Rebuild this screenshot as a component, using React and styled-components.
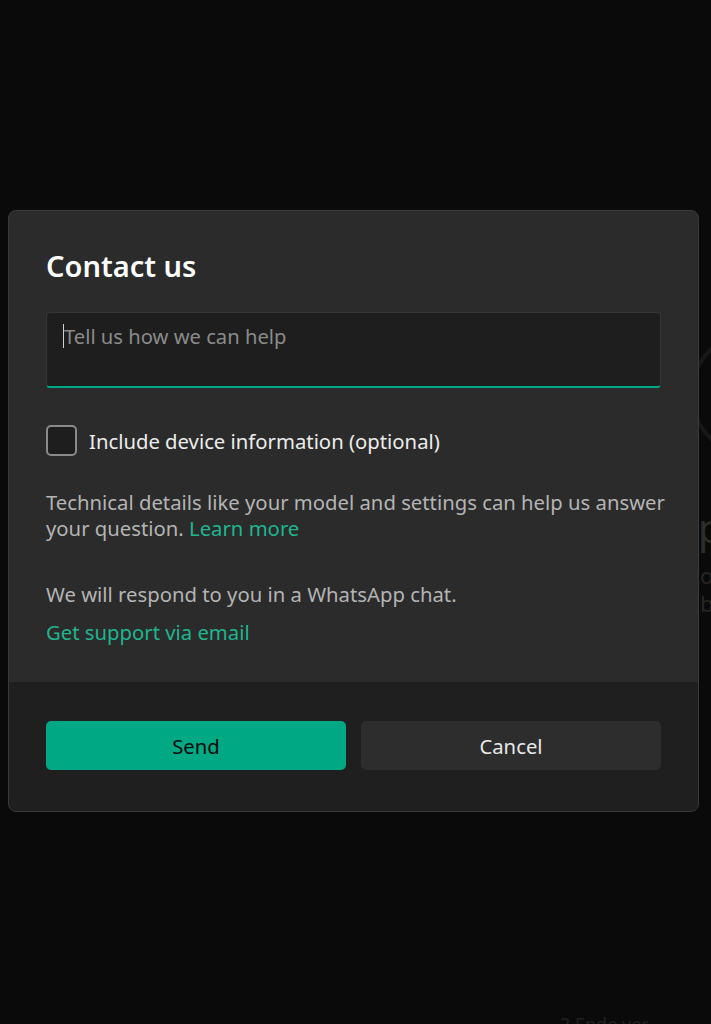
import React, { useState } from "react";
import styled, { createGlobalStyle } from "styled-components";

const GlobalStyle = createGlobalStyle`
  html, body {
    margin: 0;
    padding: 0;
    background: #0a0a0a;
  }
  body {
    font-family: "Noto Sans", "Open Sans", sans-serif;
  }
`;

const Screen = styled.div`
  position: relative;
  width: 711px;
  height: 1024px;
  overflow: hidden;
  background: #0a0a0a;
  padding: 210px 0 0 8px;
  box-sizing: border-box;
`;

// faint app content behind the scrim
const Ghost = styled.div`
  position: absolute;
  left: 690px;
  top: 0;
  width: 200px;
  height: 1024px;
`;

const GhostRing = styled.div`
  position: absolute;
  left: 0;
  top: 330px;
  width: 120px;
  height: 120px;
  border: 4px solid #181818;
  border-radius: 50%;
`;

const GhostText = styled.div`
  position: absolute;
  left: ${(p) => p.left}px;
  top: ${(p) => p.top}px;
  font-size: ${(p) => p.size}px;
  color: ${(p) => p.color};
  white-space: nowrap;
`;

const Dialog = styled.div`
  position: relative;
  width: 691px;
  box-sizing: border-box;
  border: 1px solid #3a3a3a;
  border-radius: 8px;
  overflow: hidden;
  background: #2b2b2b;
`;

const Body = styled.div`
  display: flex;
  flex-direction: column;
  padding: 36px 37px 35px;
`;

const Title = styled.h1`
  margin: 0;
  font-size: 29px;
  font-weight: 600;
  line-height: 38px;
  color: #ffffff;
`;

const TextArea = styled.div`
  margin-top: 27px;
  height: 76px;
  box-sizing: border-box;
  background: #1e1e1e;
  border: 1px solid #363636;
  border-bottom: 2px solid #00a884;
  border-radius: 4px;
  padding: 9px 16px;
  display: flex;
  align-items: flex-start;
`;

const Caret = styled.span`
  display: inline-block;
  width: 1px;
  height: 24px;
  margin-top: 2px;
  background: #d0d0d0;
`;

const Placeholder = styled.span`
  font-size: 20.2px;
  line-height: 28px;
  color: #8b8b8b;
`;

const CheckRow = styled.label`
  display: flex;
  align-items: center;
  gap: 12px;
  margin-top: 37px;
  cursor: pointer;
`;

const Box = styled.span`
  width: 31px;
  height: 31px;
  box-sizing: border-box;
  border: 2px solid #8a8a8a;
  border-radius: 5px;
  background: ${(p) => (p.checked ? "#00a884" : "#1e1e1e")};
`;

const Label = styled.span`
  font-size: 20.3px;
  color: #ececec;
`;

const Paragraph = styled.p`
  margin: ${(p) => p.mt}px -10px 0 0;
  font-size: 20.3px;
  line-height: 26px;
  color: #b4b4b4;
`;

const Link = styled.a`
  color: #1fb58f;
  text-decoration: none;
  font-size: 20.3px;
`;

const LinkLine = styled.div`
  margin-top: 12px;
  line-height: 26px;
`;

const Footer = styled.div`
  background: #1f1f1f;
  padding: 39px 37px 41px;
  display: grid;
  grid-template-columns: 1fr 1fr;
  gap: 15px;
`;

const Button = styled.button`
  height: 49px;
  border: none;
  border-radius: 5px;
  font-family: inherit;
  font-size: 20.3px;
  background: ${(p) => (p.primary ? "#00a884" : "#2d2d2d")};
  color: ${(p) => (p.primary ? "#0b0b0b" : "#e8e8e8")};
`;

const App = () => {
  const [checked, setChecked] = useState(false);

  return (
    <>
      <GlobalStyle />
      <Screen>
        <Ghost>
          <GhostRing />
          <GhostText left={8} top={500} size={40} color="#2e2e2e">
            p
          </GhostText>
          <GhostText left={10} top={560} size={22} color="#262626">
            o
          </GhostText>
          <GhostText left={10} top={588} size={22} color="#262626">
            b
          </GhostText>
        </Ghost>
        <GhostText left={560} top={1012} size={18} color="#202020">
          2 Ende ver
        </GhostText>
        <Dialog>
          <Body>
            <Title>Contact us</Title>
            <TextArea>
              <Caret />
              <Placeholder>Tell us how we can help</Placeholder>
            </TextArea>
            <CheckRow onClick={() => setChecked(!checked)}>
              <Box checked={checked} />
              <Label>Include device information (optional)</Label>
            </CheckRow>
            <Paragraph mt={33}>
              Technical details like your model and settings can help us answer
              your question. <Link href="#">Learn more</Link>
            </Paragraph>
            <Paragraph mt={40}>We will respond to you in a WhatsApp chat.</Paragraph>
            <LinkLine>
              <Link href="#">Get support via email</Link>
            </LinkLine>
          </Body>
          <Footer>
            <Button primary>Send</Button>
            <Button>Cancel</Button>
          </Footer>
        </Dialog>
      </Screen>
    </>
  );
};

export default App;
